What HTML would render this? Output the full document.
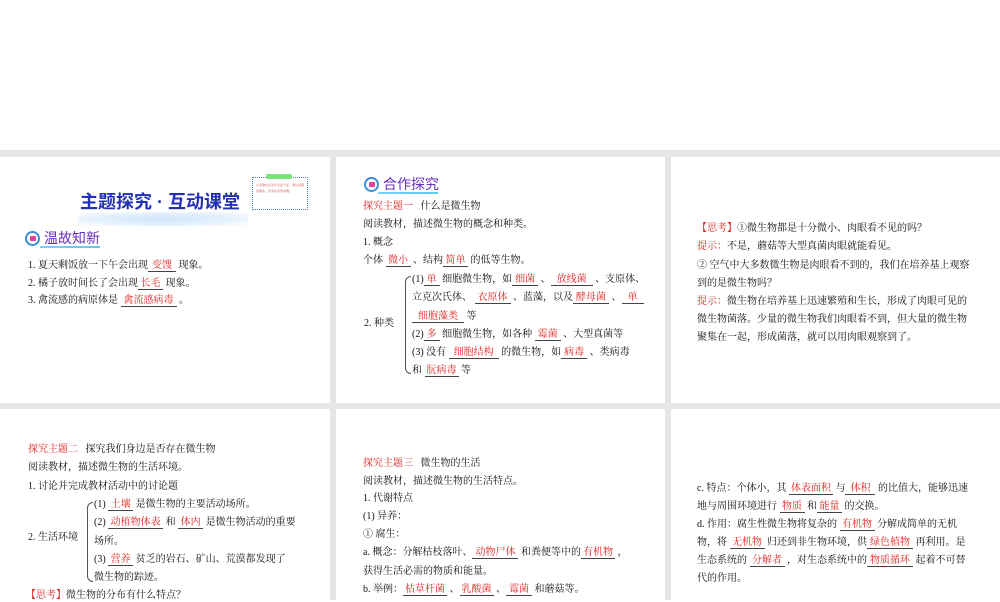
<!DOCTYPE html>
<html><head><meta charset="utf-8">
<style>
*{margin:0;padding:0;box-sizing:border-box}
body{width:1000px;height:600px;background:#fff;position:relative;overflow:hidden;font-family:"Liberation Serif","Noto Serif CJK SC","Noto Sans CJK SC",serif;color:#111}
.bg{position:absolute;background:#e6e6e6}
.s{position:absolute;background:#fff;overflow:hidden}
.l{position:absolute;font-size:10px;line-height:12px;white-space:nowrap}
.b{display:inline-block;border-bottom:1px solid #444;color:#e0201e;text-align:center;line-height:11px}
.r{color:#e0201e}
.h{position:absolute;font-family:"Liberation Sans","Noto Sans CJK SC",sans-serif;font-size:14px;color:#6a2fc0;line-height:16px}
.ic{position:absolute;width:15px;height:15px;border-radius:50%;border:2px solid #3a8fd8;background:#fff}
.ic:after{content:"";position:absolute;left:3px;top:3px;width:6px;height:5px;background:#e040a0;border-radius:1px}
.ul{position:absolute;height:2px;background:linear-gradient(90deg,#7ad0ff,#60c8e8)}
.brace{position:absolute;border:1px solid #555;border-right:none;border-radius:6px 0 0 6px}
</style></head><body>
<div class="bg" style="left:0;top:150px;width:1000px;height:450px"></div>
<div class="s" style="left:0;top:157px;width:330px;height:246px"></div>
<div class="s" style="left:336px;top:157px;width:329px;height:246px"></div>
<div class="s" style="left:671px;top:157px;width:329px;height:246px"></div>
<div class="s" style="left:0;top:409px;width:330px;height:191px"></div>
<div class="s" style="left:336px;top:409px;width:329px;height:191px"></div>
<div class="s" style="left:671px;top:409px;width:329px;height:191px"></div>

<!-- slide 1 -->
<div style="position:absolute;left:78px;top:212px;width:170px;height:14px;background:radial-gradient(ellipse at center,#cfe6fb 0%,#e6f2fd 60%,rgba(255,255,255,0) 100%)"></div>
<div style="position:absolute;left:80px;top:192px;font-family:'Liberation Sans','Noto Sans CJK SC',sans-serif;font-size:18px;font-weight:bold;color:#2230b8;line-height:21px">主题探究 · 互动课堂</div>
<div style="position:absolute;left:252px;top:177px;width:56px;height:33px;border:1px dotted #4a7ad0"></div>
<div style="position:absolute;left:266px;top:174px;width:26px;height:5px;background:#7ce07c;border-radius:2px"></div>
<div style="position:absolute;left:256px;top:182px;width:48px;height:24px;font-size:3px;line-height:6px;color:#d04040;white-space:normal">小生物在生活中无处不在，请认真阅读课本，思考并回答问题。</div>
<div class="ic" style="left:25px;top:231px"></div>
<div class="h" style="left:44px;top:230px">温故知新</div>
<div class="ul" style="left:40px;top:246px;width:60px"></div>
<div class="l" style="left:28px;top:260px">1. 夏天剩饭放一下午会出现<span class="b" style="width:28px">变馊</span> 现象。</div>
<div class="l" style="left:28px;top:278px">2. 橘子放时间长了会出现<span class="b" style="width:25px">长毛</span> 现象。</div>
<div class="l" style="left:28px;top:295px">3. 禽流感的病原体是 <span class="b" style="width:56px">禽流感病毒</span> 。</div>

<!-- slide 2 -->
<div class="ic" style="left:364px;top:177px"></div>
<div class="h" style="left:383px;top:176px">合作探究</div>
<div class="ul" style="left:378px;top:192px;width:60px"></div>
<div class="l" style="left:363px;top:201px"><span class="r">探究主题一</span>&nbsp;&nbsp;&nbsp;什么是微生物</div>
<div class="l" style="left:363px;top:219px">阅读教材，描述微生物的概念和种类。</div>
<div class="l" style="left:363px;top:237px">1. 概念</div>
<div class="l" style="left:363px;top:255px">个体 <span class="b" style="width:25px">微小</span> 、结构<span class="b" style="width:25px">简单</span> 的低等生物。</div>
<div class="brace" style="left:405px;top:276px;width:6px;height:98px"></div>
<div class="l" style="left:364px;top:318px">2. 种类</div>
<div class="l" style="left:412px;top:274px">(1)<span class="b" style="width:16px">单</span> 细胞微生物，如<span class="b" style="width:26px">细菌</span> 、<span class="b" style="width:42px">放线菌</span> 、支原体、</div>
<div class="l" style="left:412px;top:292px">立克次氏体、 <span class="b" style="width:36px">衣原体</span> 、蓝藻，以及<span class="b" style="width:36px">酵母菌</span> 、<span class="b" style="width:22px">单</span></div>
<div class="l" style="left:412px;top:311px"><span class="b" style="width:52px">细胞藻类</span> 等</div>
<div class="l" style="left:412px;top:329px">(2)<span class="b" style="width:16px">多</span> 细胞微生物，如各种 <span class="b" style="width:26px">霉菌</span> 、大型真菌等</div>
<div class="l" style="left:412px;top:347px">(3) 没有 <span class="b" style="width:50px">细胞结构</span> 的微生物，如<span class="b" style="width:26px">病毒</span> 、类病毒</div>
<div class="l" style="left:412px;top:365px">和 <span class="b" style="width:34px">朊病毒</span> 等</div>

<!-- slide 3 -->
<div class="l" style="left:697px;top:223px"><span class="r">【思考】</span>①微生物都是十分微小、肉眼看不见的吗？</div>
<div class="l" style="left:697px;top:241px"><span class="r">提示：</span>不是，蘑菇等大型真菌肉眼就能看见。</div>
<div class="l" style="left:697px;top:260px">② 空气中大多数微生物是肉眼看不到的，我们在培养基上观察</div>
<div class="l" style="left:697px;top:278px">到的是微生物吗？</div>
<div class="l" style="left:697px;top:296px"><span class="r">提示：</span>微生物在培养基上迅速繁殖和生长，形成了肉眼可见的</div>
<div class="l" style="left:697px;top:314px">微生物菌落。少量的微生物我们肉眼看不到，但大量的微生物</div>
<div class="l" style="left:697px;top:332px">聚集在一起，形成菌落，就可以用肉眼观察到了。</div>

<!-- slide 4 -->
<div class="l" style="left:28px;top:444px"><span class="r">探究主题二</span>&nbsp;&nbsp;&nbsp;探究我们身边是否存在微生物</div>
<div class="l" style="left:28px;top:462px">阅读教材，描述微生物的生活环境。</div>
<div class="l" style="left:28px;top:481px">1. 讨论并完成教材活动中的讨论题</div>
<div class="brace" style="left:87px;top:502px;width:6px;height:80px"></div>
<div class="l" style="left:28px;top:532px">2. 生活环境</div>
<div class="l" style="left:94px;top:499px">(1) <span class="b" style="width:25px">土壤</span> 是微生物的主要活动场所。</div>
<div class="l" style="left:94px;top:517px">(2) <span class="b" style="width:55px">动植物体表</span> 和 <span class="b" style="width:25px">体内</span> 是微生物活动的重要</div>
<div class="l" style="left:94px;top:536px">场所。</div>
<div class="l" style="left:94px;top:554px">(3) <span class="b" style="width:25px">营养</span> 贫乏的岩石、矿山、荒漠都发现了</div>
<div class="l" style="left:94px;top:572px">微生物的踪迹。</div>
<div class="l" style="left:26px;top:590px"><span class="r">【思考】</span>微生物的分布有什么特点？</div>

<!-- slide 5 -->
<div class="l" style="left:363px;top:458px"><span class="r">探究主题三</span>&nbsp;&nbsp;&nbsp;微生物的生活</div>
<div class="l" style="left:363px;top:476px">阅读教材，描述微生物的生活特点。</div>
<div class="l" style="left:363px;top:493px">1. 代谢特点</div>
<div class="l" style="left:363px;top:511px">(1) 异养：</div>
<div class="l" style="left:363px;top:529px">① 腐生：</div>
<div class="l" style="left:363px;top:547px">a. 概念：分解枯枝落叶、<span class="b" style="width:46px">动物尸体</span> 和粪便等中的<span class="b" style="width:34px">有机物</span> ，</div>
<div class="l" style="left:363px;top:566px">获得生活必需的物质和能量。</div>
<div class="l" style="left:363px;top:584px">b. 举例：<span class="b" style="width:44px">枯草杆菌</span> 、<span class="b" style="width:34px">乳酸菌</span> 、<span class="b" style="width:26px">霉菌</span> 和蘑菇等。</div>

<!-- slide 6 -->
<div class="l" style="left:697px;top:483px">c. 特点：个体小，其 <span class="b" style="width:44px">体表面积</span> 与<span class="b" style="width:30px">体积</span> 的比值大，能够迅速</div>
<div class="l" style="left:697px;top:501px">地与周围环境进行 <span class="b" style="width:25px">物质</span> 和<span class="b" style="width:25px">能量</span> 的交换。</div>
<div class="l" style="left:697px;top:519px">d. 作用：腐生性微生物将复杂的 <span class="b" style="width:35px">有机物</span> 分解成简单的无机</div>
<div class="l" style="left:697px;top:537px">物，将 <span class="b" style="width:35px">无机物</span> 归还到非生物环境，供<span class="b" style="width:46px">绿色植物</span> 再利用。是</div>
<div class="l" style="left:697px;top:555px">生态系统的 <span class="b" style="width:35px">分解者</span> ，对生态系统中的<span class="b" style="width:46px">物质循环</span> 起着不可替</div>
<div class="l" style="left:697px;top:573px">代的作用。</div>
</body></html>
